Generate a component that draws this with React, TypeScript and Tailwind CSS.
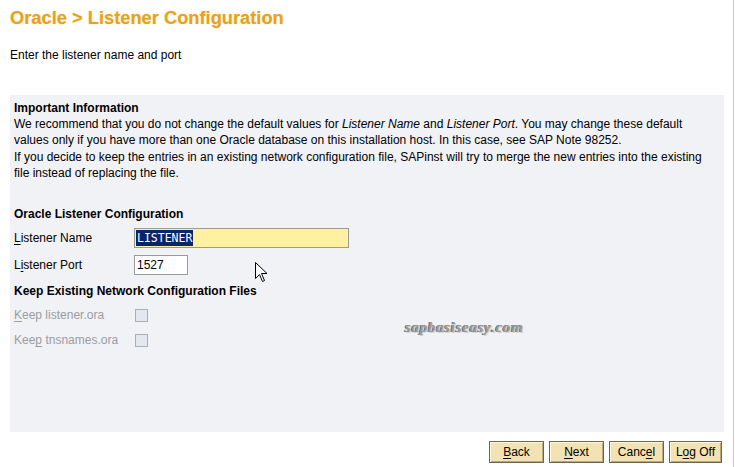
import React from "react";

const U = ({ children }: { children: React.ReactNode }) => <span className="underline underline-offset-2">{children}</span>;

function Btn({ pre, u, post, w }: { pre: string; u: string; post: string; w: string }) {
  return (
    <div className={`${w} h-[22px] flex items-center justify-center bg-[#f2e2b4] border border-[#6f6650] shadow-[inset_1px_1px_0_#fff8e0,inset_-1px_-1px_0_#b8a878] text-[12px] text-black`}>
      <span>
        {pre}
        <U>{u}</U>
        {post}
      </span>
    </div>
  );
}

export default function App() {
  return (
    <div className="w-[735px] h-[467px] bg-white relative overflow-hidden" style={{ fontFamily: '"Liberation Sans", Arial, sans-serif' }}>
      <div className="w-[734px] h-[467px] border-r border-[#c9c9c9] flex flex-col px-[10px]">
        <div className="pt-[7px] text-[18.3px] leading-[22px] font-bold text-[#e6a21e] [text-shadow:0_0_2px_#f7dca0]">
          Oracle &gt; Listener Configuration
        </div>
        <div className="mt-[18px] text-[12px] leading-[16px] text-black">Enter the listener name and port</div>

        <div className="mt-[32px] w-[714px] h-[337px] bg-[#f1f2f6] px-[4px] pt-[5px] text-[12px] text-black">
          <div className="font-bold leading-[16px]">Important Information</div>
          <div className="leading-[16.4px]">
            We recommend that you do not change the default values for <i>Listener Name</i> and <i>Listener Port</i>. You may change these default
            <br />
            values only if you have more than one Oracle database on this installation host. In this case, see SAP Note 98252.
            <br />
            If you decide to keep the entries in an existing network configuration file, SAPinst will try to merge the new entries into the existing
            <br />
            file instead of replacing the file.
          </div>

          <div className="mt-[24px] font-bold leading-[16px]">Oracle Listener Configuration</div>

          <div className="mt-[6px] flex items-center h-[20px]">
            <div className="w-[120px]">
              <U>L</U>istener Name
            </div>
            <div className="w-[215px] h-[20px] bg-[#fff0a2] border border-[#9a9a90] flex items-center pl-[1px]">
              <span className="bg-[#0a246a] text-white h-[16px] leading-[16px] px-[1px] text-[11.5px]" style={{ fontFamily: '"DejaVu Sans Mono", monospace' }}>
                LISTENER
              </span>
            </div>
          </div>

          <div className="mt-[7px] flex items-center h-[20px]">
            <div className="w-[120px]">
              L<U>i</U>stener Port
            </div>
            <div className="w-[54px] h-[20px] bg-white border border-[#9a9a9a] flex items-center pl-[2px]">1527</div>
          </div>

          <div className="mt-[8px] font-bold leading-[16px]">Keep Existing Network Configuration Files</div>

          <div className="mt-[8px] flex items-center h-[17px] text-[#9a9ca0]">
            <div className="w-[121px]">
              <U>K</U>eep listener.ora
            </div>
            <div className="w-[13px] h-[13px] bg-[#e3e7ee] border border-[#a9aeb6]" />
          </div>
          <div className="mt-[8px] flex items-center h-[17px] text-[#9a9ca0]">
            <div className="w-[121px]">
              Kee<U>p</U> tnsnames.ora
            </div>
            <div className="w-[13px] h-[13px] bg-[#e3e7ee] border border-[#a9aeb6]" />
          </div>
        </div>

        <div className="mt-[9px] flex justify-end gap-[5px] pr-[1px]">
          <Btn w="w-[55px]" pre="" u="B" post="ack" />
          <Btn w="w-[55px]" pre="" u="N" post="ext" />
          <Btn w="w-[55px]" pre="Canc" u="e" post="l" />
          <Btn w="w-[53px]" pre="L" u="o" post="g Off" />
        </div>
      </div>

      <div
        className="absolute left-[405px] top-[316px] text-[15px] font-bold italic text-[#9a9a9a] tracking-[0.7px] [text-shadow:1px_1px_0_#d0d0d0,-1px_0_0_#6a6a6a]"
        style={{ fontFamily: '"Liberation Serif", serif' }}
      >
        sapbasiseasy.com
      </div>

      <svg className="absolute left-[255px] top-[262px]" width="14" height="22" viewBox="0 0 14 22">
        <path d="M0.5 0.5 L0.5 16.5 L4.5 12.5 L7.5 19.5 L9.5 18.5 L6.5 11.5 L12 11.5 Z" fill="white" stroke="black" strokeWidth="1" />
      </svg>
    </div>
  );
}
